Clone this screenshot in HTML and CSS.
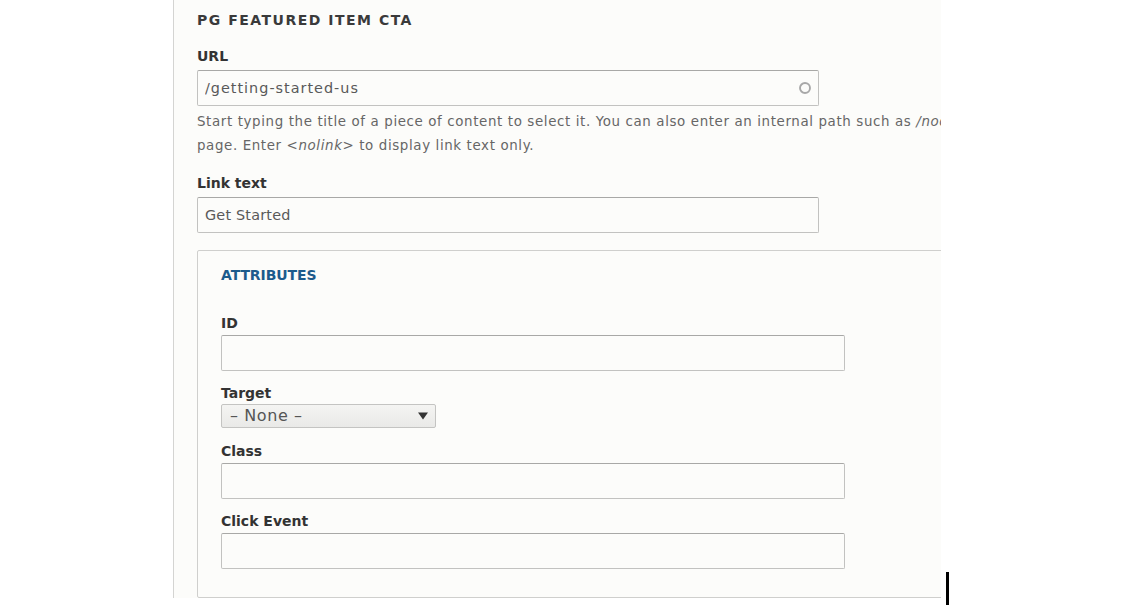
FILE: index.html
```html
<!DOCTYPE html>
<html lang="en">
<head>
<meta charset="utf-8">
<title>PG Featured Item CTA</title>
<link rel="stylesheet" href="styles.css">
</head>
<body>
<div class="panel">
  <h2 class="panel-title">PG FEATURED ITEM CTA</h2>

  <div class="field field-first">
    <label class="label" for="url">URL</label>
    <div class="input-wrap">
      <input class="text-input url-input" id="url" type="text" value="/getting-started-us">
      <svg class="throbber" width="14" height="14" viewBox="0 0 14 14" aria-hidden="true"><circle cx="7" cy="7" r="5" fill="none" stroke="#a8a8a8" stroke-width="1.9"/></svg>
    </div>
    <div class="description">
      <div class="desc-line">Start typing the title of a piece of content to select it. You can also enter an internal path such as <em>/node/add</em></div>
      <div class="desc-line">page. Enter <em>&lt;nolink&gt;</em> to display link text only.</div>
    </div>
  </div>

  <div class="field field-link">
    <label class="label" for="linktext">Link text</label>
    <input class="text-input" id="linktext" type="text" value="Get Started">
  </div>

  <fieldset class="attributes">
    <div class="legend">ATTRIBUTES</div>

    <div class="field field-id">
      <label class="label label-tight" for="attr-id">ID</label>
      <input class="text-input text-input-inner" id="attr-id" type="text">
    </div>

    <div class="field field-target">
      <label class="label label-select" for="attr-target">Target</label>
      <div class="select-wrap">
        <select class="select" id="attr-target">
          <option>– None –</option>
        </select>
        <svg class="select-arrow" width="10" height="8" viewBox="0 0 10 8" aria-hidden="true"><polygon points="0,0.5 10,0.5 5,7.5" fill="#333"/></svg>
      </div>
    </div>

    <div class="field field-class">
      <label class="label label-tight" for="attr-class">Class</label>
      <input class="text-input text-input-inner" id="attr-class" type="text">
    </div>

    <div class="field field-click">
      <label class="label label-tight" for="attr-click">Click Event</label>
      <input class="text-input text-input-inner" id="attr-click" type="text">
    </div>
  </fieldset>
</div>
<div class="cursor" aria-hidden="true"></div>
</body>
</html>
```

FILE: styles.css
```css
* {
  box-sizing: border-box;
}

html, body {
  margin: 0;
  padding: 0;
  background: #ffffff;
}

body {
  font-family: "DejaVu Sans", "Liberation Sans", sans-serif;
  color: #333;
  position: relative;
  min-height: 611px;
}

.panel {
  margin-left: 173px;
  width: 768px;
  background: #fcfcfa;
  border-left: 1px solid #d4d4d2;
  padding: 11px 0 0 23px;
  overflow: hidden;
}

.panel-title {
  margin: 0;
  font-size: 14px;
  line-height: 18px;
  font-weight: bold;
  letter-spacing: 1.5px;
  color: #3a3a3a;
}

.field {
  display: flex;
  flex-direction: column;
  align-items: flex-start;
}

.field-first {
  margin-top: 18px;
}

.field-link {
  margin-top: 16px;
}

.label {
  display: block;
  font-size: 14px;
  line-height: 18px;
  font-weight: bold;
  color: #333;
  margin-bottom: 5px;
}

.label-tight {
  margin-bottom: 3px;
}

.label-select {
  margin-bottom: 2px;
}

.input-wrap {
  position: relative;
  width: 622px;
}

.text-input {
  display: block;
  width: 622px;
  height: 36px;
  margin: 0;
  padding: 0 7px;
  font-family: "DejaVu Sans", "Liberation Sans", sans-serif;
  font-size: 14.4px;
  letter-spacing: 0.2px;
  color: #595959;
  background: #fcfcfa;
  border: 1px solid #c2c2c0;
  border-top-color: #a8a8a6;
  border-radius: 2px;
  outline: none;
}

.url-input {
  letter-spacing: 1px;
}

.text-input-inner {
  width: 624px;
}

.throbber {
  position: absolute;
  right: 7px;
  top: 11px;
}

.description {
  margin-top: 4px;
  font-size: 13.4px;
  letter-spacing: 0.62px;
  line-height: 24px;
  color: #666666;
  white-space: nowrap;
}

.description em {
  font-style: italic;
}

.attributes {
  margin: 17px 0 0 0;
  width: 820px;
  min-width: 0;
  padding: 15px 0 28px 23px;
  border: 1px solid #cfcfcd;
  border-radius: 2px;
  background: #fcfcfa;
}

.legend {
  font-size: 14px;
  line-height: 18px;
  font-weight: bold;
  color: #1c5b8c;
  letter-spacing: -0.1px;
}

.field-id {
  margin-top: 30px;
}

.field-target {
  margin-top: 13px;
}

.field-class {
  margin-top: 14px;
}

.field-click {
  margin-top: 13px;
}

.select-wrap {
  position: relative;
  width: 215px;
}

.select {
  appearance: none;
  -webkit-appearance: none;
  display: block;
  width: 215px;
  height: 24px;
  margin: 0;
  padding: 0 24px 0 8px;
  font-family: "DejaVu Sans", "Liberation Sans", sans-serif;
  font-size: 16px;
  letter-spacing: 0.6px;
  line-height: 22px;
  color: #555;
  background: linear-gradient(#f4f4f2, #e9e9e7);
  border: 1px solid #c4c4c2;
  border-radius: 2px;
  outline: none;
}

.select-arrow {
  position: absolute;
  right: 8px;
  top: 8px;
}

.cursor {
  position: absolute;
  left: 946px;
  top: 572px;
  width: 3px;
  height: 33px;
  background: #000;
}
```
